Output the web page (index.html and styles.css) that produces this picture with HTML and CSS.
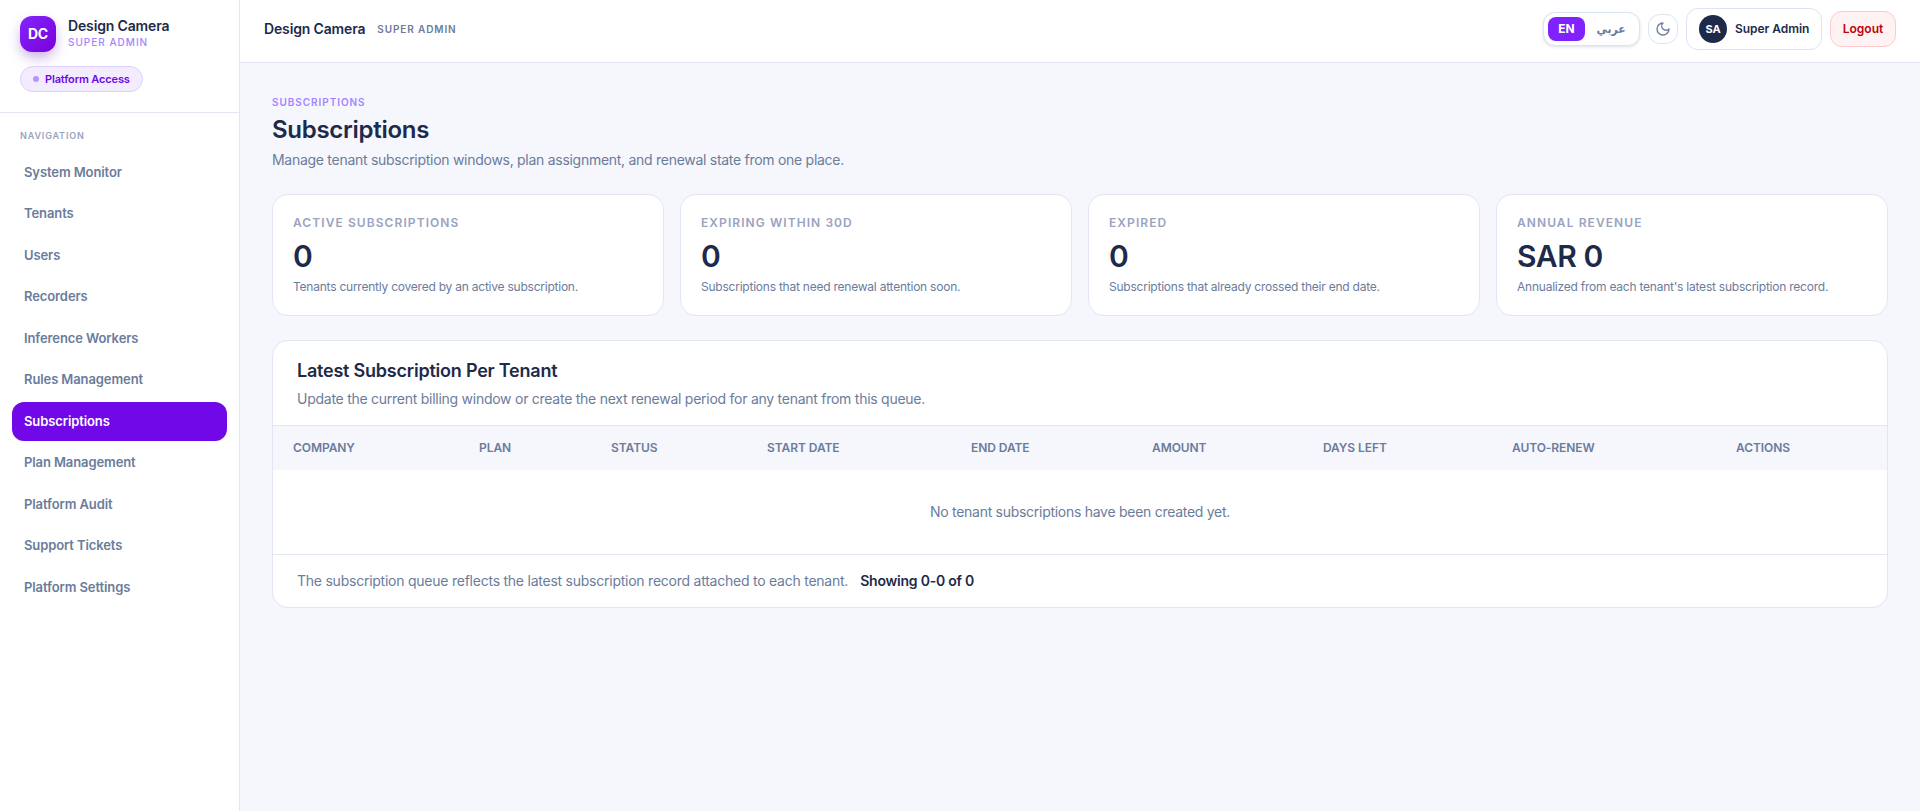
FILE: index.html
```html
<!DOCTYPE html>
<html lang="en">
<head>
    <meta charset="UTF-8">
    <meta name="viewport" content="width=device-width, initial-scale=1.0">
    <title>Design Camera - Subscriptions</title>
    <link rel="stylesheet" href="styles.css">
</head>
<body>
    <!-- Sidebar -->
    <aside class="sidebar">
        <div class="brand">
            <div class="brand-row">
                <div class="brand-logo">DC</div>
                <div class="brand-text">
                    <div class="brand-name">Design Camera</div>
                    <div class="brand-role">SUPER ADMIN</div>
                </div>
            </div>
            <div class="access-badge"><span class="access-dot"></span>Platform Access</div>
        </div>
        <div class="nav-title">NAVIGATION</div>
        <nav class="nav-list">
            <a href="#">System Monitor</a>
            <a href="#">Tenants</a>
            <a href="#">Users</a>
            <a href="#">Recorders</a>
            <a href="#">Inference Workers</a>
            <a href="#">Rules Management</a>
            <a href="#" class="active">Subscriptions</a>
            <a href="#">Plan Management</a>
            <a href="#">Platform Audit</a>
            <a href="#">Support Tickets</a>
            <a href="#">Platform Settings</a>
        </nav>
    </aside>

    <div class="page">
        <!-- Top bar -->
        <header class="topbar">
            <div class="topbar-title">
                <span class="topbar-name">Design Camera</span>
                <span class="topbar-role">SUPER ADMIN</span>
            </div>
            <div class="topbar-actions">
                <div class="lang-switch">
                    <button class="lang-btn selected">EN</button>
                    <button class="lang-btn arabic" lang="ar">عربي</button>
                </div>
                <button class="theme-btn" aria-label="Toggle theme">
                    <svg width="16" height="16" viewBox="0 0 24 24" fill="none" stroke="currentColor" stroke-width="2" stroke-linecap="round" stroke-linejoin="round">
                        <path d="M12 3a6 6 0 0 0 9 9 9 9 0 1 1-9-9Z"/>
                    </svg>
                </button>
                <div class="profile">
                    <span class="avatar">SA</span>
                    <span class="profile-name">Super Admin</span>
                </div>
                <button class="logout-btn">Logout</button>
            </div>
        </header>

        <!-- Main Content -->
        <main class="content">
            <div class="page-head">
                <div class="eyebrow">SUBSCRIPTIONS</div>
                <h1>Subscriptions</h1>
                <p>Manage tenant subscription windows, plan assignment, and renewal state from one place.</p>
            </div>

            <section class="stats">
                <div class="stat-card">
                    <div class="stat-label">ACTIVE SUBSCRIPTIONS</div>
                    <div class="stat-value">0</div>
                    <div class="stat-note">Tenants currently covered by an active subscription.</div>
                </div>
                <div class="stat-card">
                    <div class="stat-label">EXPIRING WITHIN 30D</div>
                    <div class="stat-value">0</div>
                    <div class="stat-note">Subscriptions that need renewal attention soon.</div>
                </div>
                <div class="stat-card">
                    <div class="stat-label">EXPIRED</div>
                    <div class="stat-value">0</div>
                    <div class="stat-note">Subscriptions that already crossed their end date.</div>
                </div>
                <div class="stat-card">
                    <div class="stat-label">ANNUAL REVENUE</div>
                    <div class="stat-value">SAR 0</div>
                    <div class="stat-note">Annualized from each tenant's latest subscription record.</div>
                </div>
            </section>

            <section class="panel">
                <div class="panel-head">
                    <h2>Latest Subscription Per Tenant</h2>
                    <p>Update the current billing window or create the next renewal period for any tenant from this queue.</p>
                </div>
                <table class="queue">
                    <colgroup>
                        <col class="col-company"><col class="col-plan"><col class="col-status">
                        <col class="col-start"><col class="col-end"><col class="col-amount">
                        <col class="col-days"><col class="col-renew"><col class="col-actions">
                    </colgroup>
                    <thead>
                        <tr>
                            <th>COMPANY</th>
                            <th>PLAN</th>
                            <th>STATUS</th>
                            <th>START DATE</th>
                            <th>END DATE</th>
                            <th>AMOUNT</th>
                            <th>DAYS LEFT</th>
                            <th>AUTO-RENEW</th>
                            <th>ACTIONS</th>
                        </tr>
                    </thead>
                    <tbody>
                        <tr>
                            <td class="empty" colspan="9">No tenant subscriptions have been created yet.</td>
                        </tr>
                    </tbody>
                </table>
                <div class="panel-foot">
                    <span>The subscription queue reflects the latest subscription record attached to each tenant.</span>
                    <strong>Showing 0-0 of 0</strong>
                </div>
            </section>
        </main>
    </div>
</body>
</html>
```
FILE: styles.css
```css
:root {
    --primary: #7008e7;
    --primary-bright: #7f22fe;
    --primary-soft: #a684ff;
    --navy: #1e2a4a;
    --muted: #6b7c9b;
    --faint: #9aa3c0;
    --line: #e2e6f2;
    --control-line: #dce4f1;
    --background: #f5f7fd;
    --font-family: Inter, "Noto Sans", sans-serif;
}

* {
    box-sizing: border-box;
}

body {
    margin: 0;
    display: flex;
    height: 100vh;
    overflow: hidden;
    background-color: var(--background);
    color: var(--navy);
    font-family: var(--font-family);
    font-size: 14px;
}

h1, h2, p {
    margin: 0;
}

button {
    font-family: inherit;
    padding: 0;
}

/* Sidebar */
.sidebar {
    width: 240px;
    flex-shrink: 0;
    background-color: white;
    border-right: 1px solid var(--line);
}

.brand {
    height: 113px;
    padding: 16px 20px 0;
    border-bottom: 1px solid var(--line);
}

.brand-row {
    display: flex;
    align-items: center;
    gap: 12px;
    margin-bottom: 14px;
}

.brand-logo {
    width: 36px;
    height: 36px;
    border-radius: 12px;
    background: linear-gradient(135deg, #8226ff, #7a00d8);
    box-shadow: 0 6px 14px -2px rgba(90, 20, 180, 0.4);
    color: white;
    font-size: 14px;
    font-weight: 700;
    line-height: 36px;
    text-align: center;
    letter-spacing: -0.3px;
}

.brand-text {
    padding-bottom: 2px;
}

.brand-name {
    font-size: 14px;
    font-weight: 600;
    line-height: 18px;
    letter-spacing: -0.15px;
}

.brand-role {
    color: var(--primary-soft);
    font-size: 10px;
    font-weight: 500;
    line-height: 15px;
    letter-spacing: 1px;
}

.access-badge {
    display: inline-flex;
    align-items: center;
    gap: 6px;
    height: 26px;
    padding: 0 12px;
    border: 1px solid #ddd0fb;
    border-radius: 13px;
    background-color: #f3ecfe;
    color: var(--primary);
    font-size: 11px;
    font-weight: 600;
    letter-spacing: -0.15px;
    white-space: nowrap;
}

.access-dot {
    width: 6px;
    height: 6px;
    flex-shrink: 0;
    border-radius: 50%;
    background-color: #b794ff;
}

.nav-title {
    padding: 15px 20px 9.75px;
    color: var(--faint);
    font-size: 9px;
    font-weight: 600;
    line-height: 15px;
    letter-spacing: 0.85px;
}

.nav-list {
    display: flex;
    flex-direction: column;
    gap: 2px;
    padding: 0 12px;
}

.nav-list a {
    padding: 10px 12px;
    border-radius: 12px;
    color: var(--muted);
    font-size: 13px;
    font-weight: 600;
    line-height: 19.5px;
    letter-spacing: -0.1px;
    text-decoration: none;
}

.nav-list a.active {
    background-color: var(--primary);
    color: white;
}

/* Top bar */
.page {
    flex: 1;
    min-width: 0;
}

.topbar {
    display: flex;
    align-items: flex-start;
    justify-content: space-between;
    height: 63px;
    padding: 8px 24px 0;
    background-color: white;
    border-bottom: 1px solid var(--line);
}

.topbar-title,
.topbar-actions {
    display: flex;
    align-items: center;
    height: 42px;
}

.topbar-title {
    gap: 12px;
    padding-bottom: 1px;
}

.topbar-actions {
    gap: 8px;
}

.topbar-name {
    font-size: 14px;
    font-weight: 600;
    letter-spacing: -0.15px;
}

.topbar-role {
    color: var(--muted);
    font-size: 10px;
    font-weight: 600;
    letter-spacing: 0.88px;
}

.lang-switch {
    display: flex;
    width: 97px;
    height: 34px;
    padding: 4px;
    border: 1px solid var(--control-line);
    border-radius: 12px;
    background-color: white;
    box-shadow: 0 1px 3px rgba(30, 42, 74, 0.15);
}

.lang-btn {
    width: 37px;
    height: 24px;
    flex-shrink: 0;
    border: none;
    border-radius: 8px;
    background: none;
    color: var(--muted);
    font-size: 12px;
    font-weight: 700;
}

.lang-btn.selected {
    padding-bottom: 1px;
    background-color: var(--primary-bright);
    color: white;
}

.lang-btn.arabic {
    width: 52px;
    font-family: "DejaVu Sans Condensed", "DejaVu Sans", sans-serif;
    font-size: 12px;
}

.theme-btn {
    display: flex;
    align-items: center;
    justify-content: center;
    width: 30px;
    height: 30px;
    border: 1px solid var(--control-line);
    border-radius: 12px;
    background-color: white;
    color: var(--muted);
}

.profile {
    display: flex;
    align-items: center;
    gap: 8px;
    width: 136px;
    height: 42px;
    padding: 0 12px;
    border: 1px solid var(--control-line);
    border-radius: 12px;
}

.avatar {
    width: 28px;
    height: 28px;
    flex-shrink: 0;
    border-radius: 50%;
    background-color: var(--navy);
    color: white;
    font-size: 11px;
    font-weight: 700;
    line-height: 28px;
    text-align: center;
}

.profile-name {
    padding-bottom: 1px;
    font-size: 12px;
    font-weight: 600;
    letter-spacing: -0.05px;
    white-space: nowrap;
}

.logout-btn {
    width: 66px;
    height: 36px;
    padding-bottom: 1px;
    border: 1px solid #ffc9c9;
    border-radius: 12px;
    background-color: #fef2f2;
    color: #c10007;
    font-size: 12px;
    font-weight: 600;
}

/* Main content */
.content {
    padding: 32px;
}

.page-head {
    height: 99px;
}

.eyebrow {
    color: var(--primary-soft);
    font-size: 10px;
    font-weight: 600;
    line-height: 15px;
    letter-spacing: 0.95px;
}

h1 {
    margin-top: 5px;
    font-size: 24px;
    font-weight: 600;
    line-height: 30px;
    letter-spacing: -0.28px;
}

.page-head p {
    margin-top: 4px;
    color: var(--muted);
    font-size: 14px;
    line-height: 21px;
    letter-spacing: -0.28px;
}

.stats {
    display: grid;
    grid-template-columns: repeat(4, 1fr);
    gap: 16px;
    margin-bottom: 24px;
}

.stat-card {
    height: 122px;
    padding: 20px;
    border: 1px solid var(--line);
    border-radius: 16px;
    background-color: white;
}

.stat-label {
    color: var(--faint);
    font-size: 12px;
    font-weight: 600;
    line-height: 16px;
    letter-spacing: 1.08px;
}

.stat-value {
    margin-top: 7px;
    font-size: 30px;
    font-weight: 600;
    line-height: 36px;
    letter-spacing: -0.4px;
}

.stat-note {
    margin-top: 5px;
    color: var(--muted);
    font-size: 12px;
    line-height: 16px;
    letter-spacing: -0.23px;
}

/* Subscription queue */
.panel {
    height: 268px;
    border: 1px solid var(--line);
    border-radius: 16px;
    background-color: white;
    overflow: hidden;
}

.panel-head {
    height: 85px;
    padding: 16px 24px 0;
    border-bottom: 1px solid var(--line);
}

h2 {
    font-size: 18px;
    font-weight: 600;
    line-height: 27px;
    letter-spacing: -0.22px;
}

.panel-head p {
    margin-top: 4px;
    color: var(--muted);
    font-size: 14px;
    line-height: 21px;
    letter-spacing: -0.26px;
}

.queue {
    width: 100%;
    table-layout: fixed;
    border-collapse: collapse;
}

.queue th {
    height: 44px;
    padding: 0 20px 2px;
    background-color: var(--background);
    color: var(--muted);
    font-size: 12px;
    font-weight: 600;
    letter-spacing: -0.07px;
    text-align: left;
}

.col-company { width: 186px; }
.col-plan { width: 132px; }
.col-status { width: 156px; }
.col-start { width: 204px; }
.col-end { width: 181px; }
.col-amount { width: 171px; }
.col-days { width: 189px; }
.col-renew { width: 224px; }

.queue .empty {
    height: 84px;
    padding: 0 0 2px;
    color: var(--muted);
    font-size: 14px;
    letter-spacing: -0.28px;
    text-align: center;
}

.panel-foot {
    display: flex;
    align-items: center;
    gap: 12px;
    height: 53px;
    padding: 0 24px 1px;
    border-top: 1px solid var(--line);
    color: var(--muted);
    letter-spacing: -0.24px;
}

.panel-foot strong {
    color: var(--navy);
    font-weight: 600;
    letter-spacing: -0.22px;
}
```
